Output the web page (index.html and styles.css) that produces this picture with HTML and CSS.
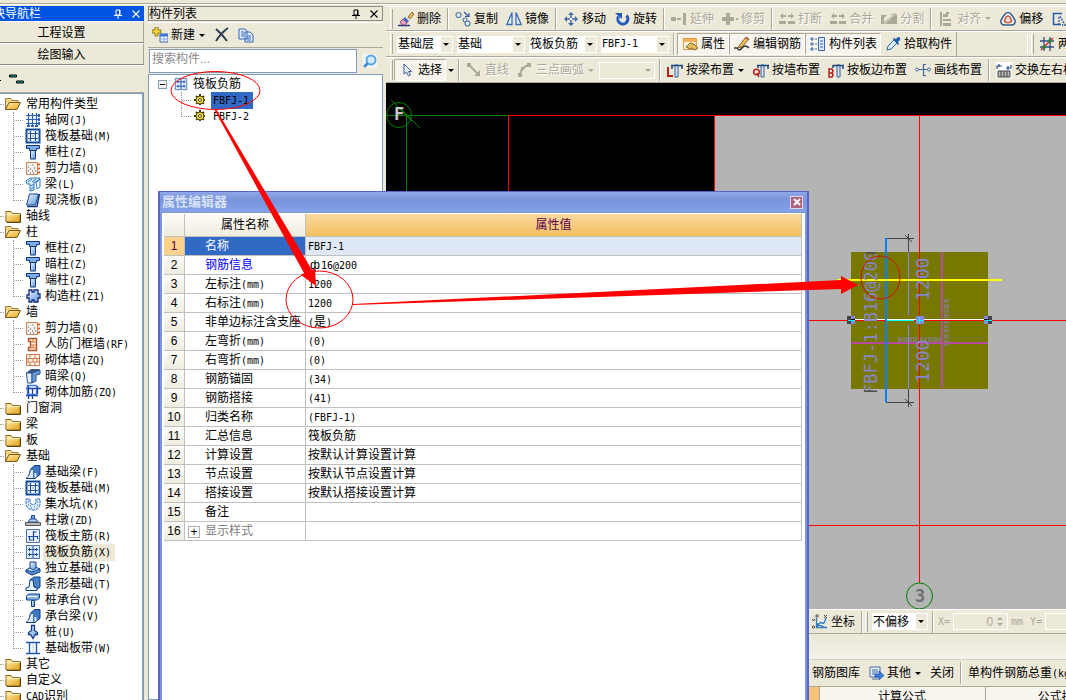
FILE: index.html
```html
<!DOCTYPE html>
<html lang="zh-CN">
<head>
<meta charset="utf-8">
<title>钢筋算量 - 属性编辑器</title>
<link rel="stylesheet" href="styles.css">
</head>
<body>
<svg class="defs" width="0" height="0" aria-hidden="true">
  <defs>
    <linearGradient id="gGold" x1="0" y1="0" x2="1" y2="1"><stop offset="0" stop-color="#fff3b0"/><stop offset="1" stop-color="#e5a01c"/></linearGradient>
    <linearGradient id="gBlue" x1="0" y1="0" x2="1" y2="1"><stop offset="0" stop-color="#f2f8ff"/><stop offset="1" stop-color="#5b93dc"/></linearGradient>
    <symbol id="folder" viewBox="0 0 16 16"><path d="M1 3.500h5l1.500 2H15V14H1z" fill="url(#gGold)" stroke="#8f6a1c"/><path d="M1.500 6.500h13" stroke="#fff6c8"/><path d="M15.500 6v8.500H2" fill="none" stroke="#5c4512"/></symbol>
    <symbol id="open" viewBox="0 0 16 16"><path d="M.5 13.500v-11h5l1.500 2h6v3" fill="#f5dc8a" stroke="#9a7a34"/><path d="M.5 13.500 4 6.500h11.500L12 13.500z" fill="url(#gGold)" stroke="#7a5a18"/></symbol>
    <symbol id="grid" viewBox="0 0 16 16"><path d="M3.500 1v14M7.500 1v14M11.500 1v14M1 3.500h14M1 7.500h14M1 11.500h14" stroke="#2b62b8" stroke-width="1.200"/><path d="M13 2h2v3h-2zM13 6h2v3h-2zM13 10h2v3h-2zM2 13h3v2H2zM6 13h3v2H6zM10 13h3v2h-3z" fill="#2b62b8"/></symbol>
    <symbol id="raft" viewBox="0 0 16 16"><path d="M1.500 1.500h13v13h-13z" fill="#fff" stroke="#14509c" stroke-width="2"/><path d="M5.500 3v10M10.500 3v10M3 5.500h10M3 10.500h10" stroke="#14509c" stroke-width="1.200"/><path d="M7 7h2v2H7z" fill="#9cc4ef"/></symbol>
    <symbol id="column" viewBox="0 0 16 16"><path d="M1.500 1.500h13v3h-3v2h-7v-2h-3z" fill="#7cabe6" stroke="#14397c"/><path d="M5.500 6.500h5V15h-5z" fill="url(#gBlue)" stroke="#14397c"/></symbol>
    <symbol id="wall" viewBox="0 0 16 16"><path d="M1.500 2.500h11v12h-11z" fill="#f1eeec" stroke="#d0825a"/><path d="M13 4.500h2M13 8.500h2M13 12.500h2" stroke="#e06020" stroke-width="2"/><path d="M3 7h1M7 5h1M5 9h1M9 8h1M3 11h1M7 11h1M10 11h1M8 13h1M5 13h1" stroke="#555"/></symbol>
    <symbol id="beam" viewBox="0 0 16 16"><path d="M1 5 5 2h10l-3 4H9v8l-4 1V8H2z" fill="#d8ebfb" stroke="#2a7ac4"/><path d="m3 6 4-3M7 6l4-3M6 10l3-2M6 13l3-2M11 6l4-3v8l-3 2z" stroke="#2a7ac4" fill="none"/></symbol>
    <symbol id="slab" viewBox="0 0 16 16"><path d="M4.500 2h9l-3 11H1.500z" fill="url(#gBlue)" stroke="#174a9c"/><path d="M14.500 2 12 14.500H2" fill="none" stroke="#0d3575" stroke-width="1.400"/></symbol>
    <symbol id="puzzle" viewBox="0 0 16 16"><path d="M4 2h3v2h2V2h4v4h2v4h-2v4H9v-2H7v2H4v-4H2V7h2z" fill="url(#gBlue)" stroke="#102c7c" stroke-width="1.300"/></symbol>
    <symbol id="door" viewBox="0 0 16 16"><path d="M3.500 2.500h8v12h-8v-3h2v-6h-2z" fill="#fff1e4" stroke="#a85428" stroke-width="1.400"/><path d="M6 6h5M6 9h5M8 3v3M8 9v3M6 12h5" stroke="#e07030"/></symbol>
    <symbol id="brick" viewBox="0 0 16 16"><path d="M1.500 2.500h13v11h-13zM1 6.500h14M1 10h14M5 2v4M10 2v4M3 6v4M8 6v4M12 6v4M5 10v4M10 10v4" fill="#fff6ee" stroke="#cf7a4c"/></symbol>
    <symbol id="hidden" viewBox="0 0 16 16"><path d="M1 5 6 1h9l-3 4z" fill="#3b5580"/><path d="M1.500 5H7v10H2.500z" fill="#e6f1fc" stroke="#26508c"/><path d="M7 5l8-3v4l-4 1v6l-4 2z" fill="#6a9bd8" stroke="#26508c"/></symbol>
    <symbol id="blockbar" viewBox="0 0 16 16"><path d="M1 4.500h15M1 11.500h12M3.500 1v14M7.500 4v11M12.500 2v8" stroke="#1a3e9c" stroke-width="1.300"/><path d="M2.500 1.500h9v9h-9z" fill="none" stroke="#3a78e0" stroke-width="1.300"/></symbol>
    <symbol id="strip" viewBox="0 0 16 16"><path d="M1 14.500c4-2 3-7 5-10l4-3h5v9l-5 4z" fill="#3f78c0" stroke="#0f3a80"/><path d="M2 14c3-2 3-5 4-8h2v8zM9.500 14V9h2v4z" fill="#dcecfd"/></symbol>
    <symbol id="pit" viewBox="0 0 16 16"><path d="M1 3h4v4q3 3 6 0V3h4v6q-2 5-7 5T1 9z" fill="#ddecfb" stroke="#2464bc" stroke-dasharray="3 1"/><path d="M3 9h1M6 12h1M9 11h1M12 9h1M5 10h1M12 6h1M3 6h1" stroke="#2464bc"/></symbol>
    <symbol id="pier" viewBox="0 0 16 16"><path d="M6.500 7V3.500h3V7" fill="#72a4e4" stroke="#1c4c98"/><path d="m3 10 2-3h6l2 3z" fill="#b6d3f4" stroke="#1c4c98"/><path d="M.5 10.500h15v3H.5z" fill="#bbb" stroke="#555"/></symbol>
    <symbol id="mainbar" viewBox="0 0 16 16"><path d="M1.500 1.500h13v13h-13z" fill="#eaf2ff" stroke="#4a70b4"/><path d="M3 8.500h10M8.500 3v10M8.500 4h3M4.500 8v4h3M12.500 8v3" fill="none" stroke="#1b4c9c" stroke-width="1.200"/></symbol>
    <symbol id="negbar" viewBox="0 0 16 16"><path d="M1.500 1.500h13v13h-13z" fill="#dfeaff" stroke="#4a70b4"/><path d="M8 2v12M3 5.500h10M3 10.500h10M4.500 4v3M11.500 4v3M4.500 9v3M11.500 9v3" stroke="#1b4c9c"/></symbol>
    <symbol id="iso" viewBox="0 0 16 16"><path d="m1 10 7-4 7 3-8 6z" fill="#b9d6f6" stroke="#0e3f88"/><path d="m1 10 6 2 8-3v3l-8 3-6-3z" fill="#5d94d8" stroke="#0e3f88"/><path d="M5 2h6v6l-3 2-3-2z" fill="url(#gBlue)" stroke="#0e3f88"/></symbol>
    <symbol id="stripf" viewBox="0 0 16 16"><path d="M5 4l4-3h6v10l-4 3z" fill="#4a82c8" stroke="#0f3a80"/><path d="M1 14.500V12l3-1 1-7h3l1 7 3 1v2.500z" fill="#eaf4ff" stroke="#0f3a80"/></symbol>
    <symbol id="cap" viewBox="0 0 16 16"><path d="m1.500 4 2-2h11v4l-2 2h-11z" fill="#86b3ea" stroke="#0f3f86"/><path d="M2 4.500h10" stroke="#fff"/><path d="M6.500 8.500h3v6h-3z" fill="url(#gBlue)" stroke="#0f3f86"/></symbol>
    <symbol id="pile" viewBox="0 0 16 16"><path d="M6.500 1.500h3v5l3 2v2h-2L8 14.500 5.500 10.500h-2v-2l3-2z" fill="url(#gBlue)" stroke="#123e84" stroke-width="1.300"/></symbol>
    <symbol id="band" viewBox="0 0 16 16"><path d="M1 2.500h14M1 13.500h14" stroke="#2458a8" stroke-width="1.500"/><path d="M4.500 3v10M11.500 3v10" stroke="#2458a8" stroke-width="1.400"/><path d="M8 3v10" stroke="#8cb0e0" stroke-dasharray="1 1"/></symbol>
    <symbol id="gear" viewBox="0 0 12 12"><path d="M6 0v12M0 6h12M2 2l8 8M10 2l-8 8" stroke="#3b3600" stroke-width="2" stroke-dasharray="2 1"/><circle cx="6" cy="6" r="4" fill="#f4e43a" stroke="#4b4400"/><circle cx="6" cy="6" r="1.500" fill="#fff" stroke="#4b4400"/></symbol>
    <symbol id="erase" viewBox="0 0 16 16"><path d="M0 14.500h12" stroke="#1b3c8c" stroke-width="1.500"/><path d="m10 6 4-5 2 2-4 5z" fill="#e8b64a" stroke="#6a5030" stroke-width=".7"/><path d="m7 6 4 4-2 2-4-4z" fill="#3d6fc8"/><path d="m5 8 4 4-2 2H4L2 11z" fill="#e9a0bc" stroke="#8a3058" stroke-width=".8"/></symbol>
    <symbol id="copy" viewBox="0 0 16 16"><g fill="#e4effc" stroke="#5577a8" stroke-width="1.200"><circle cx="3.500" cy="4" r="2.500"/><circle cx="10" cy="9" r="2"/><circle cx="12.500" cy="12.500" r="2.500"/></g><path d="m9 1 4 4M14 2v3.500h-4" fill="none" stroke="#2c5aa8" stroke-width="1.200"/></symbol>
    <symbol id="mirror" viewBox="0 0 16 16"><path d="M6 1.500v12H.8zM10 1.500v12h5.200z" fill="#e8f1fd" stroke="#3a6cb4" stroke-width="1.300"/></symbol>
    <symbol id="move" viewBox="0 0 16 16"><path d="M8 2v12M2 8h12" stroke="#3d6ba8" stroke-width="1.500"/><path d="m8 1 3 3H5zM8 15l3-3H5zM1 8l3-3v6zM15 8l-3-3v6z" fill="#3d6ba8"/><path d="M7 7h2v2H7z" fill="#fff"/></symbol>
    <symbol id="rotate" viewBox="0 0 16 16"><path d="M4.500 5.500a5 5 0 1 0 8-1" fill="none" stroke="#2458b8" stroke-width="3"/><path d="M1 2h7v6z" fill="#2458b8"/><path d="M5 7a4 4 0 0 0 6 4" fill="none" stroke="#8fbaf0"/></symbol>
    <symbol id="extend" viewBox="0 0 16 16"><path d="M0 6h5v4H0zM6 7h4v2H6zM12 2h3v12h-3z" fill="#aca899"/></symbol>
    <symbol id="trim" viewBox="0 0 16 16"><path d="M0 6h12v4H0zM4 2h4v12H4zM14 7h2v2h-2z" fill="#aca899"/></symbol>
    <symbol id="cut" viewBox="0 0 16 16"><path d="m1 5 3-3v2h3v2H4v2zM15 5l-3-3v2H9v2h3v2zM0 10h7v3H0zM9 10h7v3H9z" fill="#aca899"/></symbol>
    <symbol id="divide" viewBox="0 0 16 16"><path d="M0 4h9l5-2 2 2v9H0zM3 11l9-7-6 0-3 3z" fill="#aca899" fill-rule="evenodd"/><path d="M1 15 15 2" stroke="#ece9d8"/></symbol>
    <symbol id="align" viewBox="0 0 16 16"><path d="M2 1h2v14H2zM5 3h5v3H5zM5 8h8v2H5zM5 12h8v3H5zM8 1h3v2H8z" fill="#aca899"/></symbol>
    <symbol id="offset" viewBox="0 0 16 16"><path d="M5 3q3-3 6 0l4 6q1 5-4 5H5Q0 14 1 9z" fill="#eef2f6" stroke="#34608e" stroke-width="1.500"/><path d="M6.500 5.500q1.500-1 3 0l2 4q0 2-2 2h-3q-2 0-2-2z" fill="#ffe2da" stroke="#c8523c" stroke-width="1.500"/></symbol>
    <symbol id="stretch" viewBox="0 0 16 16"><path d="M11 2.500H2.500v11H10" fill="none" stroke="#2458a8" stroke-width="1.500"/><path d="m9 5 5 9h-3M8 6v7" fill="none" stroke="#2458a8" stroke-dasharray="2 1" stroke-width="1.300"/></symbol>
    <symbol id="prop" viewBox="0 0 16 16"><path d="M1.500 2.500h13v11h-13z" fill="#fff5df" stroke="#e8973c"/><path d="M2 3h12v3H2z" fill="#f6b35a"/><path d="m4 11 4-4 4 1 4 4-3 2-3-2-2 1z" fill="#e8bd56" stroke="#5e4a20" stroke-width=".8"/></symbol>
    <symbol id="edit" viewBox="0 0 16 16"><path d="M0 12h3q2 4 5 0t7 0" fill="none" stroke="#333" stroke-width="1.500"/><path d="m5 10 7-9 3 2-7 8-4 1z" fill="#efc04e" stroke="#5a4420" stroke-width=".8"/><path d="m12 1 3 2-1 1-3-2z" fill="#d0504a"/></symbol>
    <symbol id="list" viewBox="0 0 16 16"><path d="M1 2h2v2H1zM1 7h2v2H1zM1 12h2v2H1z" fill="none" stroke="#3e66ac"/><path d="M5 3h2M5 8h2M5 13h2" stroke="#3e66ac"/><path d="M8.500 1.500h6v13h-6z" fill="#dce9fb" stroke="#3e66ac"/><path d="M10 5h3M10 8h3M10 11h3" stroke="#3e66ac"/></symbol>
    <symbol id="pick" viewBox="0 0 16 16"><path d="m2 14 1-4 6-6 3 3-6 6z" fill="#dff0ff" stroke="#2a62a8"/><path d="m8 3 1-1 2 1 2-2q3 0 2 3l-2 2 1 2-1 1z" fill="#1d5fae"/></symbol>
    <symbol id="two" viewBox="0 0 16 16"><path d="M5 1v14M11 1v14M1 5h14M1 11h14" stroke="#384c8c" stroke-width="1.300"/><path d="M2 14 14 2" stroke="#d02020" stroke-width="1.500"/><circle cx="5" cy="11" r="2" fill="#2f8a2f"/><circle cx="11" cy="5" r="2" fill="#2f8a2f"/></symbol>
    <symbol id="cursor" viewBox="0 0 16 16"><path d="M5 2v10l2.500-2 2 4 2-1-2-3.500h3z" fill="#eef5ff" stroke="#3d5f98"/></symbol>
    <symbol id="line" viewBox="0 0 16 16"><path d="M3 3 13 13" stroke="#aca899" stroke-width="2"/><path d="M1 1h4v4H1zM14 8v6H8z" fill="#aca899"/></symbol>
    <symbol id="arc" viewBox="0 0 16 16"><path d="M3 13Q4 5 12 3" fill="none" stroke="#aca899" stroke-width="2"/><path d="M1 11h4v4H1zM10 1h4v4h-4zM4 5h3v3H4z" fill="#aca899"/></symbol>
    <symbol id="byL" viewBox="0 0 16 16"><path d="M1 5v9h5" fill="none" stroke="#b22020" stroke-width="2"/><path d="M8 3h3v12H8z" fill="#d3e4f8" stroke="#3a6098"/><path d="M4 3.500h12M5 3v4M15 3v4" stroke="#1c4680" stroke-width="1.500"/></symbol>
    <symbol id="byQ" viewBox="0 0 16 16"><circle cx="3.500" cy="10" r="2.800" fill="none" stroke="#b22020" stroke-width="1.500"/><path d="m4 11 2 4" stroke="#b22020" stroke-width="1.500"/><path d="M8 3h3v12H8z" fill="#d3e4f8" stroke="#3a6098"/><path d="M4 3.500h12M5 3v3M15 3v4" stroke="#1c4680" stroke-width="1.500"/></symbol>
    <symbol id="byB" viewBox="0 0 16 16"><path d="M1 7h3q2 2 0 4 2 2 0 4H1zM1 11h3" fill="none" stroke="#b22020" stroke-width="1.500"/><path d="M9 3h3v12H9z" fill="#d3e4f8" stroke="#3a6098"/><path d="M5 3.500h11M5 3v3M15 3v4" stroke="#1c4680" stroke-width="1.500"/></symbol>
    <symbol id="byLine" viewBox="0 0 16 16"><path d="M2 7.500h6M8 7.500h6M11 2.500H8.500v11H11" fill="none" stroke="#44669c" stroke-width="1.200"/><circle cx="2" cy="7.500" r="1.500" fill="#fff" stroke="#44669c"/><circle cx="14" cy="7.500" r="1.500" fill="#fff" stroke="#44669c"/></symbol>
    <symbol id="swap" viewBox="0 0 16 16"><path d="M0 0h16v16H0z" fill="#fff"/><path d="M1 7V4h5M15 3v3h-5M3 2v3M12 4v4" fill="none" stroke="#24508c" stroke-width="1.200"/><path d="M2 9h12v6H2zM5 9v6M8 9v6M11 9v6" fill="#b8b8b8" stroke="#444"/></symbol>
    <symbol id="new" viewBox="0 0 16 16"><path d="M3 0h3v3h3v3H6v3H3V6H0V3h3z" fill="#f4d438" stroke="#7a6410" stroke-width=".8"/><path d="M8 7h8v8H8z" fill="#eef5ff" stroke="#3d68b4"/><path d="M8 7h8v2.500H8z" fill="#3d78d8"/><path d="M8 12h8M12 9v6" stroke="#8aace0"/></symbol>
    <symbol id="del" viewBox="0 0 16 16"><path d="M2 2q6 5 11 12M14 1Q7 6 2 14" fill="none" stroke="#2e3d56" stroke-width="2"/></symbol>
    <symbol id="pages" viewBox="0 0 16 16"><path d="M1 2h6l2 2v8H1zM7 5h5l3 3v7H7z" fill="#e4efff" stroke="#3264ba"/><path d="M3 5h3M3 7h3M3 9h3M9 9h4M9 11h4M9 13h4" stroke="#3264ba"/></symbol>
    <symbol id="find" viewBox="0 0 16 16"><path d="M1 1h14v14H1z" fill="#f2f6fa"/><circle cx="9" cy="7" r="4.500" fill="#cfe8fb" stroke="#5aa8e4" stroke-width="2"/><path d="m6 10-4 4" stroke="#3d88cc" stroke-width="2.500"/></symbol>
    <symbol id="coord" viewBox="0 0 16 16"><path d="M4.500 4v9.500H15M4 9l8 4M5 13q3-6 5-4t4-5" fill="none" stroke="#2c7cc8" stroke-width="1.300"/><circle cx="5" cy="2" r="1.200" fill="none" stroke="#444"/><circle cx="1.500" cy="13" r="1.200" fill="none" stroke="#444"/><path d="m12 1 3 3M15 1l-3 3M0 5l1.500 2L3 5" stroke="#444" fill="none"/></symbol>
    <symbol id="export" viewBox="0 0 16 16"><path d="M2 2h10v10H2z" fill="#e6effc" stroke="#4868a0"/><path d="M4 5h6M4 7h6M4 9h4M4 14h6" stroke="#4868a0"/><path d="M7 9h4V6l5 4.500-5 4.500v-3H7z" fill="#3a7de0" stroke="#184a9c" stroke-width=".7"/></symbol>
    <symbol id="pin" viewBox="0 0 10 10"><path d="M3 1h4v5H3zM1 6.500h8M5 7v3" fill="none" stroke="currentColor"/><path d="M6 1h1v5H6z" fill="currentColor"/></symbol>
    <symbol id="x" viewBox="0 0 10 10"><path d="m1.500 1.500 7 7M8.500 1.500l-7 7" stroke="currentColor" stroke-width="1.100"/></symbol>
  </defs>
</svg>

<div class="app">
  <aside class="nav">
    <header class="cap cap-blue"><h2 class="nav-title">模块导航栏</h2><button class="mini" aria-label="固定"><svg><use href="#pin"/></svg></button><button class="mini" aria-label="关闭导航"><svg><use href="#x"/></svg></button></header>
    <button class="mode">工程设置</button>
    <button class="mode">绘图输入</button>
    <div class="treebar"><svg width="30" height="12" aria-hidden="true"><path d="M-3 8.500h4M9.500 3h7v2h-7zM16.500 9h7v2h-7z" fill="#0aa" stroke="#000"/></svg></div>
    <ul class="tree">
      <li><a class="dir" href="#"><svg><use href="#open"/></svg>常用构件类型</a>
        <ul>
          <li><a href="#"><svg><use href="#grid"/></svg><span>轴网<i>(J)</i></span></a></li>
          <li><a href="#"><svg><use href="#raft"/></svg><span>筏板基础<i>(M)</i></span></a></li>
          <li><a href="#"><svg><use href="#column"/></svg><span>框柱<i>(Z)</i></span></a></li>
          <li><a href="#"><svg><use href="#wall"/></svg><span>剪力墙<i>(Q)</i></span></a></li>
          <li><a href="#"><svg><use href="#beam"/></svg><span>梁<i>(L)</i></span></a></li>
          <li><a href="#"><svg><use href="#slab"/></svg><span>现浇板<i>(B)</i></span></a></li>
        </ul></li>
      <li><a class="dir" href="#"><svg><use href="#folder"/></svg>轴线</a></li>
      <li><a class="dir" href="#"><svg><use href="#open"/></svg>柱</a>
        <ul>
          <li><a href="#"><svg><use href="#column"/></svg><span>框柱<i>(Z)</i></span></a></li>
          <li><a href="#"><svg><use href="#column"/></svg><span>暗柱<i>(Z)</i></span></a></li>
          <li><a href="#"><svg><use href="#column"/></svg><span>端柱<i>(Z)</i></span></a></li>
          <li><a href="#"><svg><use href="#puzzle"/></svg><span>构造柱<i>(Z1)</i></span></a></li>
        </ul></li>
      <li><a class="dir" href="#"><svg><use href="#open"/></svg>墙</a>
        <ul>
          <li><a href="#"><svg><use href="#wall"/></svg><span>剪力墙<i>(Q)</i></span></a></li>
          <li><a href="#"><svg><use href="#door"/></svg><span>人防门框墙<i>(RF)</i></span></a></li>
          <li><a href="#"><svg><use href="#brick"/></svg><span>砌体墙<i>(ZQ)</i></span></a></li>
          <li><a href="#"><svg><use href="#hidden"/></svg><span>暗梁<i>(Q)</i></span></a></li>
          <li><a href="#"><svg><use href="#blockbar"/></svg><span>砌体加筋<i>(ZQ)</i></span></a></li>
        </ul></li>
      <li><a class="dir" href="#"><svg><use href="#folder"/></svg>门窗洞</a></li>
      <li><a class="dir" href="#"><svg><use href="#folder"/></svg>梁</a></li>
      <li><a class="dir" href="#"><svg><use href="#folder"/></svg>板</a></li>
      <li><a class="dir" href="#"><svg><use href="#open"/></svg>基础</a>
        <ul>
          <li><a href="#"><svg><use href="#strip"/></svg><span>基础梁<i>(F)</i></span></a></li>
          <li><a href="#"><svg><use href="#raft"/></svg><span>筏板基础<i>(M)</i></span></a></li>
          <li><a href="#"><svg><use href="#pit"/></svg><span>集水坑<i>(K)</i></span></a></li>
          <li><a href="#"><svg><use href="#pier"/></svg><span>柱墩<i>(ZD)</i></span></a></li>
          <li><a href="#"><svg><use href="#mainbar"/></svg><span>筏板主筋<i>(R)</i></span></a></li>
          <li><a href="#"><svg><use href="#negbar"/></svg><span class="current">筏板负筋<i>(X)</i></span></a></li>
          <li><a href="#"><svg><use href="#iso"/></svg><span>独立基础<i>(P)</i></span></a></li>
          <li><a href="#"><svg><use href="#stripf"/></svg><span>条形基础<i>(T)</i></span></a></li>
          <li><a href="#"><svg><use href="#cap"/></svg><span>桩承台<i>(V)</i></span></a></li>
          <li><a href="#"><svg><use href="#strip"/></svg><span>承台梁<i>(V)</i></span></a></li>
          <li><a href="#"><svg><use href="#pile"/></svg><span>桩<i>(U)</i></span></a></li>
          <li><a href="#"><svg><use href="#band"/></svg><span>基础板带<i>(W)</i></span></a></li>
        </ul></li>
      <li><a class="dir" href="#"><svg><use href="#folder"/></svg>其它</a></li>
      <li><a class="dir" href="#"><svg><use href="#folder"/></svg>自定义</a></li>
      <li><a class="dir" href="#"><svg><use href="#folder"/></svg><span><i>CAD</i>识别</span></a></li>
    </ul>
  </aside>

  <section class="parts">
    <header class="cap cap-plain"><h2>构件列表</h2><button class="mini" aria-label="固定列表"><svg><use href="#pin"/></svg></button><button class="mini" aria-label="关闭列表"><svg><use href="#x"/></svg></button></header>
    <div class="parts-tools">
      <button class="tool"><svg><use href="#new"/></svg>新建<span class="tri"></span></button>
      <button class="tool" aria-label="删除构件"><svg><use href="#del"/></svg></button>
      <button class="tool" aria-label="复制构件"><svg><use href="#pages"/></svg></button>
    </div>
    <div class="search"><input type="text" placeholder="搜索构件..." aria-label="搜索构件"><button aria-label="搜索"><svg><use href="#find"/></svg></button></div>
    <div class="parts-tree">
      <a class="root" href="#"><span class="minus"></span><svg><use href="#negbar"/></svg>筏板负筋</a>
      <ul>
        <li><a href="#"><svg><use href="#gear"/></svg><span class="picked"><i>FBFJ-1</i></span></a></li>
        <li><a href="#"><svg><use href="#gear"/></svg><span><i>FBFJ-2</i></span></a></li>
      </ul>
    </div>
  </section>

  <main class="work">
    <div class="bar">
      <span class="grip"></span>
      <button class="tool"><svg><use href="#erase"/></svg>删除</button><span class="sep"></span>
      <button class="tool"><svg><use href="#copy"/></svg>复制</button>
      <button class="tool"><svg><use href="#mirror"/></svg>镜像</button><span class="sep"></span>
      <button class="tool"><svg><use href="#move"/></svg>移动</button>
      <button class="tool"><svg><use href="#rotate"/></svg>旋转</button><span class="sep"></span>
      <button class="tool" disabled><svg><use href="#extend"/></svg>延伸</button>
      <button class="tool" disabled><svg><use href="#trim"/></svg>修剪</button><span class="sep"></span>
      <button class="tool" disabled><svg><use href="#cut"/></svg>打断</button>
      <button class="tool" disabled><svg><use href="#cut"/></svg>合并</button>
      <button class="tool" disabled><svg><use href="#divide"/></svg>分割</button><span class="sep"></span>
      <button class="tool" disabled><svg><use href="#align"/></svg>对齐<span class="tri"></span></button>
      <button class="tool"><svg><use href="#offset"/></svg>偏移</button>
      <button class="tool" aria-label="拉伸"><svg><use href="#stretch"/></svg></button>
    </div>
    <div class="bar">
      <span class="grip"></span>
      <span class="combo narrow"><select aria-label="楼层"><option>基础层</option></select></span>
      <span class="combo"><select aria-label="构件大类"><option>基础</option></select></span>
      <span class="combo"><select aria-label="构件类型"><option>筏板负筋</option></select></span>
      <span class="combo"><select class="latin" aria-label="构件"><option>FBFJ-1</option></select></span>
      <span class="sep"></span>
      <button class="tool on"><svg><use href="#prop"/></svg>属性</button>
      <button class="tool on"><svg><use href="#edit"/></svg>编辑钢筋</button>
      <button class="tool on"><svg><use href="#list"/></svg>构件列表</button>
      <button class="tool"><svg><use href="#pick"/></svg>拾取构件</button>
      <span class="bar-end"></span>
      <span class="bar-next"><span class="grip"></span><button class="tool"><svg><use href="#two"/></svg>两点</button></span>
    </div>
    <div class="bar">
      <span class="grip"></span>
      <button class="tool on"><svg><use href="#cursor"/></svg>选择</button><button class="drop" aria-label="选择方式"><span class="tri"></span></button><span class="sep"></span>
      <button class="tool" disabled><svg><use href="#line"/></svg>直线</button>
      <button class="tool" disabled><svg><use href="#arc"/></svg>三点画弧<span class="tri"></span></button>
      <span class="combo narrow off"><select disabled aria-label="画弧方式"><option></option></select></span><span class="sep"></span>
      <button class="tool"><svg><use href="#byL"/></svg>按梁布置<span class="tri"></span></button>
      <button class="tool"><svg><use href="#byQ"/></svg>按墙布置</button>
      <button class="tool"><svg><use href="#byB"/></svg>按板边布置</button>
      <button class="tool"><svg><use href="#byLine"/></svg>画线布置</button><span class="sep"></span>
      <button class="tool"><svg><use href="#swap"/></svg>交换左右标注</button>
    </div>

    <div class="canvas">
      <svg class="drawing" role="img" aria-label="筏板负筋平面图">
        <defs>
          <linearGradient id="labelInk" gradientUnits="userSpaceOnUse" x1="0" y1="0" x2="146" y2="0"><stop offset=".03" stop-color="#4c4c4c"/><stop offset=".03" stop-color="#8686cf"/><stop offset=".96" stop-color="#8686cf"/><stop offset=".96" stop-color="#4c4c4c"/></linearGradient>
        </defs>
        <g transform="translate(-386 -83)" shape-rendering="crispEdges">
          <rect x="715" y="116" width="2000" height="1000" fill="#b4b4b4"/>
          <path d="M386 115.500h122M406.500 115v600M391 100l29 28" stroke="#008000" fill="none"/>
          <path d="M508 115.500h2000M508.500 115v600M714.500 115v600M715 525.500h2000" stroke="#f00"/>
          <path d="M851 252h137v137H851z" fill="#787800"/>
          <path d="M942 252v136M851 343h137" stroke="#b44ba0" stroke-width="2"/>
          <path d="M898 339.500h43" stroke="#7d7d5c" stroke-width="5" stroke-dasharray="4 1 5 1 3 1"/>
          <path d="M946.500 299v47" stroke="#7d7d5c" stroke-width="5" stroke-dasharray="4 1 5 1 3 1"/>
          <path d="M908.500 234v18M908.500 389v18M886 238.500h28M886 402.500h28M905 235l7 7M905 399l7 7" stroke="#444"/>
          <path d="M908.500 252v63M908.500 325v64" stroke="#8686f0"/>
          <path d="M919.500 116v467M809 320.500h1500" stroke="#f00"/>
          <path d="M855 319.500h130" stroke="#fff"/>
          <path d="M886 320.500h28" stroke="#0ff"/>
          <path d="M886 238v164" stroke="#0080ff" stroke-width="2"/>
          <path d="M837 280h165" stroke="#ff0" stroke-width="2"/>
          <path d="M847 316h4v8h-4zM988 316h4v8h-4z" fill="#444"/>
          <path d="M851 316h4v8h-4zM984 316h4v8h-4zM916 316h8v8h-8z" fill="#8686f0"/>
          <path d="M848 320.500h7M985 320.500h7M917 320.500h7M919.500 317v7" stroke="#0ff"/>
          <path d="M851 319.500h4M984 319.500h4" stroke="#000"/>
        </g>
        <g transform="translate(-386 -83)">
          <circle cx="399" cy="115" r="12.500" fill="none" stroke="#008000"/>
          <circle cx="919.500" cy="596" r="13" fill="none" stroke="#008000"/>
          <text class="axis" x="399" y="120" fill="#c8c8c8">F</text>
          <text class="axis" x="920" y="602" fill="#707070">3</text>
          <text class="mark" transform="translate(877 394) rotate(-90)" fill="url(#labelInk)">FBFJ-1:B16@200</text>
          <text class="dim" transform="translate(929 301) rotate(-90)">1200</text>
          <text class="dim" transform="translate(929 383) rotate(-90)">1200</text>
        </g>
      </svg>
    </div>

    <div class="bottom">
      <div class="bar coords">
        <button class="tool"><svg><use href="#coord"/></svg>坐标</button><span class="sep"></span><span class="grip"></span>
        <span class="combo narrow"><select aria-label="偏移方式"><option>不偏移</option></select></span><span class="sep"></span>
        <label class="field"><i>X=</i><input type="text" value="0" disabled><span class="spin"><b class="up"></b><b></b></span></label><i class="unit">mm</i>
        <label class="field"><i>Y=</i><input type="text" value="0" disabled><span class="spin"><b class="up"></b><b></b></span></label>
      </div>
      <div class="split"></div>
      <div class="bar steel">
        <button class="tool">钢筋图库</button>
        <button class="tool"><svg><use href="#export"/></svg>其他<span class="tri"></span></button>
        <button class="tool">关闭</button><span class="sep"></span>
        <span class="total">单构件钢筋总重<i>(kg)</i>：0</span>
      </div>
      <table class="calc"><thead><tr><th class="corner"></th><th class="formula">计算公式</th><th>公式描述</th></tr></thead></table>
    </div>
  </main>

  <section class="dialog" aria-label="属性编辑器">
    <header><h2>属性编辑器</h2><button aria-label="关闭属性编辑器"><svg viewBox="0 0 8 8"><path d="m1 1 6 6M7 1 1 7" stroke="#fff" stroke-width="2"/></svg></button></header>
    <div class="sheet">
    <table class="props">
      <colgroup><col class="c-no"><col class="c-name"><col></colgroup>
      <thead><tr><th></th><th>属性名称</th><th class="gold">属性值</th></tr></thead>
      <tbody>
        <tr class="sel"><th>1</th><td>名称</td><td><i>FBFJ-1</i></td></tr>
        <tr class="key"><th>2</th><td>钢筋信息</td><td><span class="rebar">ф</span><i>16@200</i></td></tr>
        <tr><th>3</th><td>左标注<i>(mm)</i></td><td><i>1200</i></td></tr>
        <tr><th>4</th><td>右标注<i>(mm)</i></td><td><i>1200</i></td></tr>
        <tr><th>5</th><td>非单边标注含支座</td><td><i>(</i>是<i>)</i></td></tr>
        <tr><th>6</th><td>左弯折<i>(mm)</i></td><td><i>(0)</i></td></tr>
        <tr><th>7</th><td>右弯折<i>(mm)</i></td><td><i>(0)</i></td></tr>
        <tr><th>8</th><td>钢筋锚固</td><td><i>(34)</i></td></tr>
        <tr><th>9</th><td>钢筋搭接</td><td><i>(41)</i></td></tr>
        <tr><th>10</th><td>归类名称</td><td><i>(FBFJ-1)</i></td></tr>
        <tr><th>11</th><td>汇总信息</td><td>筏板负筋</td></tr>
        <tr><th>12</th><td>计算设置</td><td>按默认计算设置计算</td></tr>
        <tr><th>13</th><td>节点设置</td><td>按默认节点设置计算</td></tr>
        <tr><th>14</th><td>搭接设置</td><td>按默认搭接设置计算</td></tr>
        <tr><th>15</th><td>备注</td><td></td></tr>
        <tr class="group"><th>16</th><td><button class="plus" aria-label="展开显示样式">+</button>显示样式</td><td></td></tr>
      </tbody>
    </table>
    </div>
  </section>

  <svg class="notes" aria-hidden="true">
    <g fill="none" stroke="#f00">
      <ellipse cx="215.500" cy="90.500" rx="44.500" ry="19"/>
      <ellipse cx="319.500" cy="299.500" rx="33.500" ry="28.500"/>
      <ellipse cx="880.500" cy="277.500" rx="19.500" ry="21.500" stroke="#d01010"/>
    </g>
    <path d="M214 109h2L312 270l3-2 1 18-15-11 3-2z" fill="#f00"/>
    <path d="M353 304 841 280v-4l17 9-17 9v-5L353 305z" fill="#f00"/>
  </svg>
</div>
</body>
</html>
```
FILE: styles.css
```css
* { box-sizing: border-box; }
body {
  margin: 0;
  background: #ece9d8;
  color: #000;
  font: 12px/16px "Liberation Sans", "Noto Sans CJK SC", sans-serif;
}
button, input, select { font: inherit; color: inherit; margin: 0; padding: 0; border: 0; border-radius: 0; background: none; }
button { display: flex; align-items: center; white-space: nowrap; }
h2 { margin: 0; font-size: 12px; font-weight: normal; line-height: 16px; white-space: nowrap; }
i, .latin { font: 10px/16px "DejaVu Sans Mono", monospace; }
ul { list-style: none; margin: 0; padding: 0; }
a { color: inherit; text-decoration: none; }
svg { flex: none; width: 16px; height: 16px; }
.defs { position: absolute; width: 0; height: 0; }

.app {
  position: relative;
  display: grid;
  grid-template-columns: 144px 235px minmax(0, 1fr);
  column-gap: 4px;
  height: 100vh;
  padding-top: 6px;
  overflow: hidden;
  background: linear-gradient(#ece9d8 3px, #aca899 3px, #aca899 4px, #fff 4px, #fff 5px, #ece9d8 5px);
}

.nav, .parts { display: flex; flex-direction: column; min-height: 0; }
.cap { display: flex; align-items: center; gap: 8px; height: 15px; flex: none; overflow: hidden; padding-right: 3px; }
.cap h2 { flex: 1; }
.cap-blue { background: #0054e3; color: #fff; }
.nav-title { margin-left: -19px; }
.cap-plain { border: 1px solid #8c8a80; }
.mini svg { width: 10px; height: 10px; }
.mode {
  justify-content: center;
  flex: none;
  height: 22px;
  padding: 2px 20px 0 0;
  border-top: 1px solid #fff;
  border-bottom: 1px solid #8c8a80;
  border-right: 1px solid #aca899;
}
.treebar { height: 28px; flex: none; padding-top: 6px; border-top: 1px solid #fff; border-bottom: 1px solid #aca899; }
.treebar svg { width: 30px; height: 12px; }

.tree { flex: 1; min-height: 0; overflow: hidden; padding-top: 2px; background: #fff; border-top: 1px solid #7f9db9; border-right: 2px solid #7f9db9; }
.tree a, .parts-tree a { display: flex; align-items: center; height: 16px; white-space: nowrap; }
.tree a svg { margin-right: 4px; }
.tree a.dir svg { margin-right: 5px; }
.dir::before { content: ""; width: 4px; margin-right: 1px; border-top: 1px dotted #aca899; }
.tree ul { padding-left: 13px; }
.tree li li a::before, .parts-tree li a::before {
  content: "";
  align-self: stretch;
  width: 10px;
  margin-right: 1px;
  border-left: 1px dotted #a09c8c;
  background: repeating-linear-gradient(90deg, #a09c8c 0 1px, transparent 1px 2px) 0 8px / 100% 1px no-repeat;
}
.tree li li:last-child a::before, .parts-tree li:last-child a::before { align-self: flex-start; height: 9px; }
.current { margin-left: -2px; padding: 0 4px 0 2px; background: #ece9d8; }

.parts-tools { display: flex; align-items: center; flex: none; height: 26px; margin-top: 1px; border-top: 1px solid #fff; border-bottom: 1px solid #aca899; }
.search { display: flex; flex: none; height: 26px; padding: 1px 0 1px 1px; }
.search input { flex: 1; min-width: 0; height: 24px; padding: 0 2px 4px; background: #fff; border: 1px solid #7f9db9; }
.search input::placeholder { color: #8a8a8a; opacity: 1; }
.search button { padding: 0 5px; }
.parts-tree { flex: 1; padding-top: 1px; background: #fff; border: 1px solid #7f9db9; }
.root { padding-left: 9px; gap: 5px; }
.root svg { margin-left: 2px; width: 14px; }
.minus { width: 9px; height: 9px; border: 1px solid #7f9db9; background: linear-gradient(#000, #000) center / 5px 1px no-repeat #f4f2ea; }
.parts-tree ul { padding-left: 32px; }
.parts-tree li svg { width: 12px; height: 12px; margin: 0 5px 0 1px; }
.parts-tree li span { padding: 0 4px 0 2px; }
.picked { background: #316ac5; }

.work { display: flex; flex-direction: column; min-width: 0; min-height: 0; margin-left: -1px; }
.bar {
  display: flex;
  align-items: center;
  flex: none;
  height: 26px;
  padding-left: 4px;
  overflow: hidden;
  border-top: 1px solid #fff;
  border-bottom: 1px solid #aca899;
}
.bar > * { flex: none; }
.bar:first-child { height: 25px; }
.grip { width: 3px; height: 20px; margin: 0 1px 0 0; border-right: 1px solid #aca899; border-left: 1px solid #fff; }
.sep { width: 2px; height: 22px; margin: 0 2px; border-left: 1px solid #aca899; border-right: 1px solid #fff; }
.tool { gap: 3px; height: 22px; padding: 0 4px; }
.tool:disabled { color: #aca899; text-shadow: 1px 1px #fff; }
.tool.on { border: 1px solid #aca899; border-right-color: #fff; border-bottom-color: #fff; background: #f6f4ec; padding: 0 3px 0 4px; }
.tri { width: 0; height: 0; border: 3px solid transparent; border-top-color: currentColor; border-bottom: 0; }
.tool .tri { margin: 0 1px; }
.drop { height: 22px; padding: 0 2px; }
.combo { display: flex; align-items: center; width: 68px; height: 17px; margin-right: 4px; padding-right: 3px; background: linear-gradient(#ece9d8, #ece9d8) right / 11px 15px no-repeat #fff; border: 1px solid #fff; }
.grip + .combo { margin-left: 3px; }
.combo.narrow { width: 56px; }
.combo.off { background: none; }
.combo select { flex: 1; min-width: 0; height: 16px; padding: 0; appearance: none; }
.combo::after { content: ""; border: 3px solid transparent; border-top-color: #000; border-bottom: 0; }
.combo.off::after { border-top-color: #aca899; }
.bar .combo + .sep { margin-left: 0; }
.bar-end { width: 2px; align-self: stretch; border-left: 1px solid #aca899; }
.bar .bar-next { display: flex; align-items: center; margin-left: 69px; padding-left: 3px; border-left: 1px solid #fff; }

.canvas { flex: 1; min-height: 0; overflow: hidden; background: #000; }
.drawing { display: block; width: 100%; height: 100%; }
.axis { font: bold 17px "DejaVu Sans Mono", monospace; text-anchor: middle; }
.mark { font: 17px "DejaVu Sans Mono", monospace; }
.dim { font: 18px "DejaVu Sans Mono", monospace; fill: #8686cf; }

.bottom { flex: none; height: 91px; padding-left: 422px; overflow: hidden; }
.coords { padding-left: 0; }
.field { display: flex; align-items: center; gap: 3px; height: 18px; margin-left: 2px; color: #aca899; }
.field input { width: 40px; height: 17px; padding-right: 0; text-align: right; border: 1px solid #fff; border-right: 0; }
.spin { display: grid; gap: 3px; place-content: center; width: 15px; height: 17px; margin-left: -3px; border: 1px solid #fff; border-left: 0; }
.spin b { border: 3px solid transparent; border-top-color: currentColor; border-bottom: 0; }
.spin .up { border: 3px solid transparent; border-bottom-color: currentColor; border-top: 0; }
.unit { margin: 0 5px 0 3px; color: #aca899; }
.split { height: 26px; border-top: 4px solid #ece9d8; border-bottom: 1px solid #d8d2bd; background: linear-gradient(#ece9d8, #f4f2ea); }
.steel { height: 27px; padding-left: 0; border-top: 0; }
.total { padding-left: 4px; white-space: nowrap; }
.calc { width: 331px; border-collapse: collapse; table-layout: fixed; background: #f7f5ee; }
.calc th { height: 19px; padding: 0; font-weight: normal; border-right: 1px solid #aca899; }
.calc .corner { width: 11px; background: #f6c378; }
.calc .formula { width: 166px; }

.dialog {
  position: absolute;
  left: 158px;
  top: 191px;
  bottom: 0;
  display: flex;
  flex-direction: column;
  width: 651px;
  border: solid #5a64c8;
  border-width: 1px 2px 0;
  background: #7b96e0;
}
.dialog header { display: flex; align-items: center; flex: none; height: 20px; padding: 0 4px 0 2px; background: linear-gradient(#8fa8ea, #7894dc 40%, #84a2e8); }
.dialog h2 { flex: 1; font-size: 13px; font-weight: bold; color: #d8e2f8; }
.dialog header button { justify-content: center; width: 13px; height: 13px; border: 1px solid #e0d4e4; background: #b0647c; }
.dialog header svg { width: 8px; height: 8px; }
.sheet { flex: 1; min-height: 0; margin: 0 2px; padding: 1px 3px 0 2px; background: #fff; border-top: 1px solid #7f9db9; }
.props { width: 100%; border-collapse: separate; border-spacing: 0; table-layout: fixed; }
.c-no { width: 21px; }
.c-name { width: 121px; }
.props th, .props td { height: 19px; padding: 0; border: solid #c0c0c0; border-width: 0 1px 1px 0; font-weight: normal; line-height: 16px; white-space: nowrap; }
.props td { padding-left: 2px; }
.props th { background: linear-gradient(#fdfcf8, #efecdf); }
.props thead .gold { color: #5c0050; background: linear-gradient(#fadaa0, #f2bf60); }
.props thead th { height: 23px; }
.props td:nth-child(2) { padding-left: 20px; }
.props .sel th { background: #ffd28c; color: #5c0050; }
.sel td { background: #dfe9f5; }
.props .sel td:nth-child(2) { background: #316ac5; color: #fff; }
.key td:nth-child(2) { color: #00f; }
.rebar { padding: 0 1px 0 2px; }
.props .group td { padding-left: 3px; color: #808080; }
.plus { display: inline-flex; justify-content: center; width: 12px; height: 12px; margin-right: 5px; color: #000; border: 1px solid #b0b0b0; line-height: 10px; vertical-align: middle; }

.notes { position: absolute; left: 0; top: 0; width: 100%; height: 100%; pointer-events: none; }
```
